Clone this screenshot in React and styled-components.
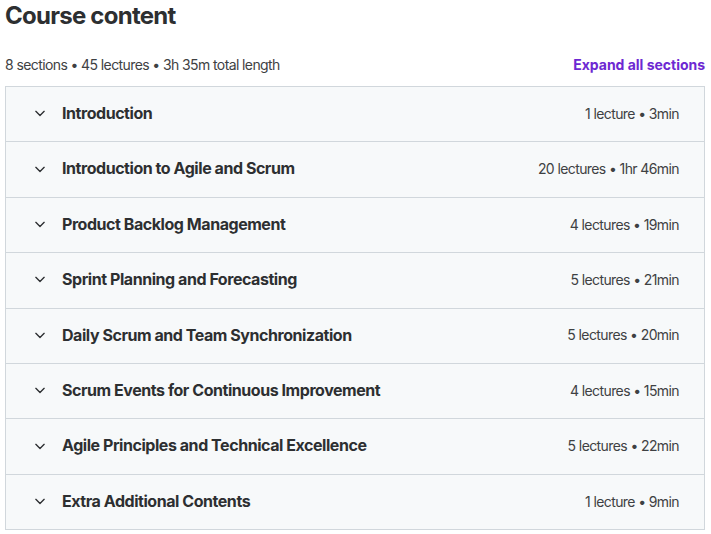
import React from "react";
import styled, { createGlobalStyle } from "styled-components";

const Global = createGlobalStyle`
  html, body { margin: 0; padding: 0; background: #ffffff; }
  body { font-family: Inter, "Noto Sans", sans-serif; color: #2d2f31; }
  * { box-sizing: border-box; }
`;

const Page = styled.div`
  padding: 0 6px 0 5px;
  width: 711px;
`;

const Title = styled.h2`
  margin: 0;
  font-size: 24px;
  line-height: 31px;
  font-weight: 700;
  letter-spacing: -0.75px;
  color: #2d2f31;
`;

const Summary = styled.div`
  display: flex;
  align-items: center;
  justify-content: space-between;
  margin-top: 23px;
  margin-bottom: 12px;
  height: 20px;
`;

const SummaryText = styled.span`
  font-size: 14px;
  letter-spacing: -0.6px;
  color: #3e4143;
`;

const ExpandButton = styled.button`
  border: 0;
  background: none;
  padding: 0;
  font-family: inherit;
  font-size: 14px;
  font-weight: 700;
  letter-spacing: -0.02px;
  color: #6d28d2;
  cursor: pointer;
`;

const Accordion = styled.div`
  border: 1px solid #d1d7dc;
  border-bottom: 0;
`;

const Row = styled.div`
  display: flex;
  align-items: center;
  gap: 12px;
  padding: 15px 25px 17px 24px;
  background: #f7f9fa;
  border-bottom: 1px solid #d1d7dc;
`;

const Chevron = styled.svg`
  width: 20px;
  height: 20px;
  flex: none;
  color: #2d2f31;
`;

const SectionTitle = styled.span`
  flex: 1;
  font-size: 16px;
  line-height: 22.4px;
  font-weight: 700;
  letter-spacing: -0.45px;
  color: #2d2f31;
`;

const SectionMeta = styled.span`
  font-size: 14px;
  letter-spacing: -0.6px;
  color: #3e4143;
`;

const sections = [
  ["Introduction", "1 lecture • 3min"],
  ["Introduction to Agile and Scrum", "20 lectures • 1hr 46min"],
  ["Product Backlog Management", "4 lectures • 19min"],
  ["Sprint Planning and Forecasting", "5 lectures • 21min"],
  ["Daily Scrum and Team Synchronization", "5 lectures • 20min"],
  ["Scrum Events for Continuous Improvement", "4 lectures • 15min"],
  ["Agile Principles and Technical Excellence", "5 lectures • 22min"],
  ["Extra Additional Contents", "1 lecture • 9min"],
];

export default function App() {
  return (
    <Page>
      <Global />
      <Title>Course content</Title>
      <Summary>
        <SummaryText>8 sections • 45 lectures • 3h 35m total length</SummaryText>
        <ExpandButton>Expand all sections</ExpandButton>
      </Summary>
      <Accordion>
        {sections.map(([t, m]) => (
          <Row key={t}>
            <Chevron viewBox="0 0 24 24" fill="none" stroke="currentColor" strokeWidth="1.6" strokeLinecap="round" strokeLinejoin="round">
              <path d="M7 10l5 5 5-5" />
            </Chevron>
            <SectionTitle>{t}</SectionTitle>
            <SectionMeta>{m}</SectionMeta>
          </Row>
        ))}
      </Accordion>
    </Page>
  );
}
